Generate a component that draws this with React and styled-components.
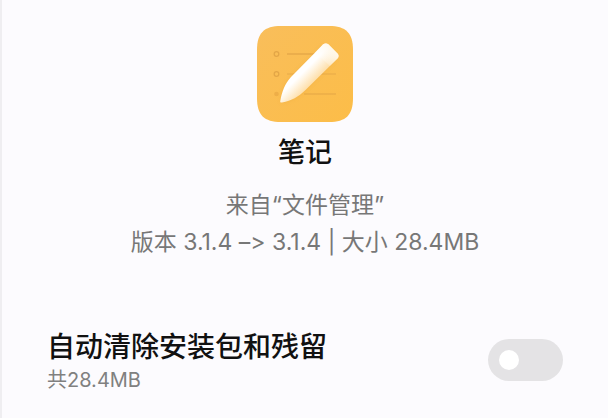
import React, { useState } from 'react';
import styled, { createGlobalStyle } from 'styled-components';

const GlobalStyle = createGlobalStyle`
  * {
    box-sizing: border-box;
  }

  body {
    margin: 0;
    background-color: #fcfbfe;
    font-family: 'Inter', 'Noto Sans CJK SC', sans-serif;
    font-variant-ligatures: none;
  }
`;

const Page = styled.main`
  min-height: 100vh;
  padding: 25px 45px 24px;
  border-left: 2px solid #efeef1;
`;

const AppInfo = styled.header`
  display: flex;
  flex-direction: column;
  align-items: center;
  text-align: center;
`;

const AppName = styled.h1`
  margin: 10px 0 0;
  font-size: 27px;
  line-height: 40px;
  font-weight: 500;
  color: #111;
`;

const Details = styled.div`
  margin-top: 14px;
  font-size: 23px;
  line-height: 37px;
  color: #777;

  p {
    margin: 0;
  }
`;

const SettingRow = styled.section`
  display: flex;
  align-items: center;
  justify-content: space-between;
  margin-top: 66px;
`;

const SettingTitle = styled.label`
  display: block;
  font-size: 28px;
  line-height: 40px;
  font-weight: 500;
  color: #111;
`;

const SettingNote = styled.p`
  margin: 0;
  font-size: 20px;
  line-height: 26px;
  color: #808080;
`;

const Switch = styled.input`
  appearance: none;
  display: flex;
  align-items: center;
  width: 75px;
  height: 42px;
  margin: 0;
  padding: 0 11px;
  border-radius: 21px;
  background-color: #e4e3e5;

  &::before {
    content: '';
    width: 20px;
    height: 20px;
    border-radius: 50%;
    background-color: #fff;
  }

  &:checked {
    justify-content: flex-end;
    background-color: #f9be4e;
  }
`;

const NotesIcon = () => (
  <svg width="98" height="98" viewBox="0 0 98 98" fill="none" aria-hidden="true">
    <defs>
      <linearGradient id="paper" x1="0" y1="0" x2="1" y2="1">
        <stop offset="0" stopColor="#f9be5b" />
        <stop offset="1" stopColor="#fcbd48" />
      </linearGradient>
      <linearGradient id="pen" x1="46" y1="40" x2="60" y2="54" gradientUnits="userSpaceOnUse">
        <stop offset="0.3" stopColor="#fff" />
        <stop offset="1" stopColor="#fee0ac" />
      </linearGradient>
      <linearGradient id="cap" x1="62" y1="36" x2="76" y2="22" gradientUnits="userSpaceOnUse">
        <stop offset="0" stopColor="#fff" stopOpacity="0" />
        <stop offset="1" stopColor="#fff8ea" />
      </linearGradient>
      <filter id="shade" x="-20%" y="-20%" width="140%" height="140%">
        <feGaussianBlur stdDeviation="2" />
      </filter>
    </defs>
    <path
      d="M25 1H73C90 1 97 8 97 25V73C97 90 90 97 73 97H25C8 97 1 90 1 73V25C1 8 8 1 25 1Z"
      fill="url(#paper)"
    />
    <g stroke="#e3a647" strokeWidth="1.3">
      <circle cx="20.5" cy="29" r="2.3" />
      <circle cx="20.5" cy="49" r="2.3" />
      <path d="M31 29H62" />
      <path d="M31 49H80" opacity="0.6" />
      <path d="M48 69H80" opacity="0.8" />
    </g>
    <circle cx="20.5" cy="69" r="2.3" fill="#eeae48" />
    <path
      d="M67 21L34 54C28 61 26 69 25 77C34 76 41 72 47 67L80 34Z"
      fill="#df9b32"
      opacity="0.35"
      filter="url(#shade)"
    />
    <path
      d="M67 19.5C68.5 18 71 18 72.5 19.5L81.5 28.5C83 30 83 32 81.5 33.5L49.5 65C42 72 36 75.5 26 77.5C24.2 77.8 24 77 24.4 75.5C26 67 28.5 59 35 52Z"
      fill="url(#pen)"
    />
    <path
      d="M67 19.5C68.5 18 71 18 72.5 19.5L81.5 28.5C83 30 83 32 81.5 33.5L74 41L59 27.5Z"
      fill="url(#cap)"
    />
  </svg>
);

const App = () => {
  const [autoClean, setAutoClean] = useState(false);

  return (
    <>
      <GlobalStyle />
      <Page>
        <AppInfo>
          <NotesIcon />
          <AppName>笔记</AppName>
          <Details>
            <p>来自“文件管理”</p>
            <p>版本 3.1.4 –&gt; 3.1.4 | 大小 28.4MB</p>
          </Details>
        </AppInfo>
        <SettingRow>
          <div>
            <SettingTitle htmlFor="auto-clean">自动清除安装包和残留</SettingTitle>
            <SettingNote>共28.4MB</SettingNote>
          </div>
          <Switch
            id="auto-clean"
            type="checkbox"
            role="switch"
            checked={autoClean}
            onChange={(e) => setAutoClean(e.target.checked)}
          />
        </SettingRow>
      </Page>
    </>
  );
};

export default App;
